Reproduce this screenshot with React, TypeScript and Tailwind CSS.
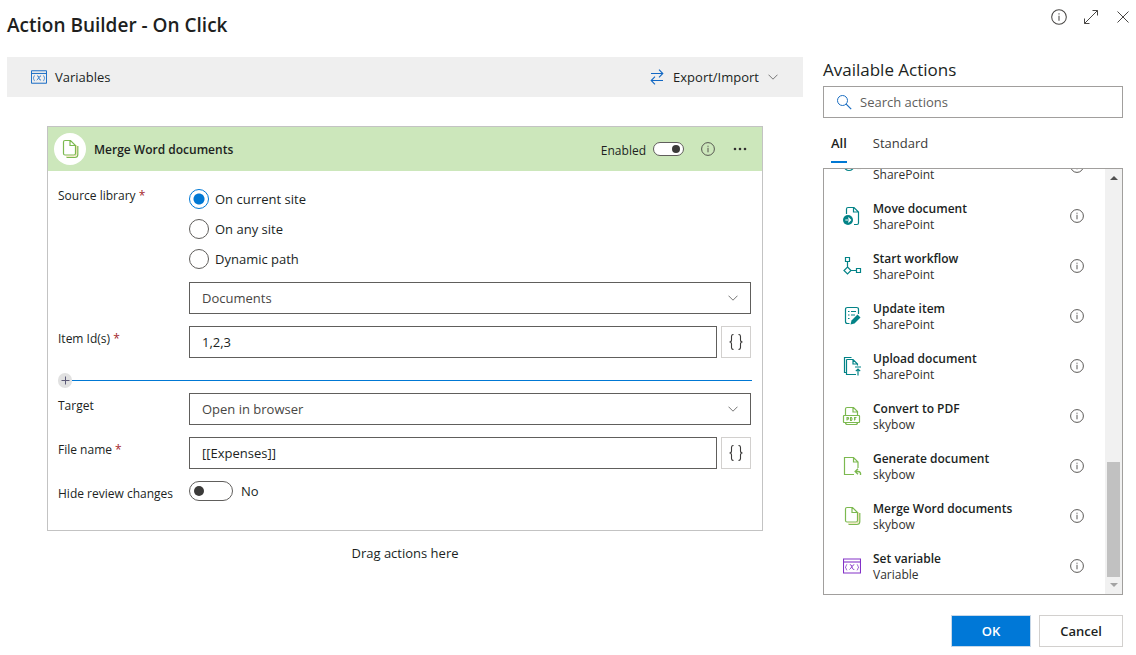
import { useState, type ReactNode } from "react";

const TEAL = "#038387";
const GREEN = "#7cb950";

function InfoIcon({ size = 14 }: { size?: number }) {
  return (
    <svg width={size} height={size} viewBox="0 0 14 14" fill="none" stroke="currentColor" aria-hidden="true">
      <circle cx="7" cy="7" r="6.4" strokeWidth="0.9" />
      <path d="M7 5.800v4.500M7 3.700v1.100" strokeWidth="0.9" />
    </svg>
  );
}

function ChevronIcon() {
  return (
    <svg width="10" height="6" viewBox="0 0 10 6" fill="none" stroke="#777" aria-hidden="true">
      <path d="M.5.7 5 5.2 9.500.7" />
    </svg>
  );
}

function VariableIcon({ color, size = 18 }: { color: string; size?: number }) {
  return (
    <svg width={size} height={size} viewBox="0 0 18 18" fill="none" stroke={color} aria-hidden="true">
      <path d="M.5 2h17v14H.5z" strokeWidth="1.1" />
      <path d="M.5 5h17" strokeWidth="1.1" />
      <path d="M4.200 7.500q-1 0-1 1.200t-1 1.600q1 .4 1 1.600t1 1.300M13.800 7.500q1 0 1 1.200t1 1.600q-1 .4-1 1.600t-1 1.300" strokeWidth=".8" />
      <path d="M6.800 7.700q1.500-.2 2 1.500l.5 2q.5 1.500 2 1.200M11.300 7.700q-1.300 0-2.300 1.800T6.500 12.500" strokeWidth=".9" />
    </svg>
  );
}

function Doc({ color, children }: { color: string; children: ReactNode }) {
  return (
    <svg width="20" height="20" viewBox="0 0 20 20" fill="none" stroke={color} strokeWidth="1.2" aria-hidden="true">
      {children}
    </svg>
  );
}

function ItemIcon() {
  return (
    <Doc color={TEAL}>
      <circle cx="7" cy="9.500" r="5" />
      <path d="M15 12.500h4" stroke="#b0b8b8" />
    </Doc>
  );
}

function MoveIcon() {
  return (
    <Doc color={TEAL}>
      <path d="M4.500 8V3q0-1.500 1.500-1.500h6l4.500 4.500v11q0 1.500-1.500 1.500h-3M11.500 1.500V6h5" />
      <circle cx="6" cy="14" r="5" fill={TEAL} stroke="none" />
      <path d="M3.300 14h5M6.300 11.700 8.600 14l-2.300 2.300" stroke="#fff" />
    </Doc>
  );
}

function WorkflowIcon() {
  return (
    <Doc color={TEAL}>
      <path d="M3.500 1.500h4v4h-4zM14.500 12.500h4v4h-4zM5.500 5.500v5.500M9 14.500h5.500M5.500 11 9 14.500 5.500 18 2 14.500z" />
    </Doc>
  );
}

function UpdateIcon() {
  return (
    <Doc color={TEAL}>
      <path d="M16.500 8V3.500q0-2-2-2h-9q-2 0-2 2v12q0 2 2 2h2M6 5.500h1.500M9 5.500h5M6 9h1.500M9 9h4M6 12.500h1.500" />
      <path d="m8.500 18.500 1-4 6-6 3 3-6 6z" fill={TEAL} stroke="none" />
    </Doc>
  );
}

function UploadIcon() {
  return (
    <Doc color={TEAL}>
      <path d="M9.500 1.500h-7v15h2M4.500 3.500v15H14M4.500 3.500h6.500l4.500 4.500v1.500M11 3.500V8h4.500M13 11h6M16 19.500v-6.500M13.800 15.200l2.200-2.200 2.200 2.200" />
    </Doc>
  );
}

function PdfIcon() {
  return (
    <Doc color={GREEN}>
      <path d="M3.500 9.500V3q0-1.500 1.500-1.500h6.500l4 4v4M11 1.500v4.500h4.500M2 9.500h15q.5 0 .5.500v6q0 .5-.5.500H2q-.5 0-.5-.5v-6q0-.5.500-.5M3.500 16.500q0 2 2 2h8q2 0 2-2" />
      <path d="M5 14.500v-3h1.300q.7.800 0 1.600H5M8.500 11.500v3h1q1.200-1.500 0-3zM12.500 14.500v-3h2M12.500 13h1.500" strokeWidth="1.1" />
    </Doc>
  );
}

function GenerateIcon() {
  return (
    <Doc color={GREEN}>
      <path d="M12 18.500H2.500v-17h9L16 6v6M11.500 1.500V6H16" />
      <path d="M13.500 15.500h2.500q3 0 2.500 3.500M16 12.800l-2.800 2.700 2.800 2.700" strokeWidth="1.4" />
    </Doc>
  );
}

function MergeIcon() {
  return (
    <Doc color={GREEN}>
      <path d="M3.500 3q0-1.500 1.500-1.500h5.500L15.500 6.500v8q0 1.500-1.500 1.500H5q-1.500 0-1.500-1.500zM10 1.500V6.500h5" />
      <path d="M17.800 7v8.500q0 3-3 3H6.500" />
      <path d="M16.600 6v8.500q0 2.700-2.700 2.700H6" stroke="#e0c878" strokeWidth=".6" />
    </Doc>
  );
}

const actions = [
  { name: "", source: "SharePoint", icon: <ItemIcon /> },
  { name: "Move document", source: "SharePoint", icon: <MoveIcon /> },
  { name: "Start workflow", source: "SharePoint", icon: <WorkflowIcon /> },
  { name: "Update item", source: "SharePoint", icon: <UpdateIcon /> },
  { name: "Upload document", source: "SharePoint", icon: <UploadIcon /> },
  { name: "Convert to PDF", source: "skybow", icon: <PdfIcon /> },
  { name: "Generate document", source: "skybow", icon: <GenerateIcon /> },
  { name: "Merge Word documents", source: "skybow", icon: <MergeIcon /> },
  { name: "Set variable", source: "Variable", icon: <VariableIcon color="#8332c8" /> },
];

function Field({ label, id, required, children }: { label: string; id: string; required?: boolean; children: ReactNode }) {
  return (
    <div className="flex">
      <label htmlFor={id} className="w-[131px] shrink-0 pt-[5px] text-[12px] leading-4">
        {label}
        {required && <span className="text-[#a4262c]"> *</span>}
      </label>
      <div className="min-w-0 flex-1">{children}</div>
    </div>
  );
}

function Select({ id, value }: { id: string; value: string }) {
  return (
    <div className="relative">
      <select id={id} className="h-8 w-full appearance-none border border-[#605e5c] bg-white px-3 pt-0.5 text-[13px] text-[#484644]">
        <option>{value}</option>
      </select>
      <span className="pointer-events-none absolute inset-y-0 right-[13px] flex items-center">
        <ChevronIcon />
      </span>
    </div>
  );
}

function ExpressionInput({ id, value }: { id: string; value: string }) {
  return (
    <div className="flex gap-1">
      <input id={id} defaultValue={value} className="h-8 min-w-0 flex-1 border border-[#605e5c] px-3 text-[13px]" />
      <button type="button" aria-label="Insert expression" className="flex h-8 w-[30px] items-center justify-center border border-[#d2d0ce]">
        <svg width="14" height="16" viewBox="0 0 14 16" fill="none" stroke="#3b3a39" strokeWidth="1.100" aria-hidden="true">
          <path d="M4.500.5Q2.500.5 2.500 2.500v3.500q0 2-2 2 2 0 2 2v3.500q0 2 2 2M9.500.5q2 0 2 2v3.500q0 2 2 2-2 0-2 2v3.500q0 2-2 2" />
        </svg>
      </button>
    </div>
  );
}

export default function App() {
  const [site, setSite] = useState("On current site");
  return (
    <div className="flex h-screen min-h-[655px] flex-col bg-white pr-[13px] pl-[7px] font-['Open_Sans','Noto_Sans',sans-serif] text-[13px] text-[#201f1e]">
      <header className="flex h-[57px] shrink-0 items-start justify-between">
        <h1 className="pt-3 text-[19px] leading-[26px] font-semibold">Action Builder - On Click</h1>
        <div className="-mr-2 flex items-center gap-4 pt-[9px] text-[#484644]">
          <button type="button" aria-label="Information"><InfoIcon size={16} /></button>
          <button type="button" aria-label="Expand">
            <svg width="16" height="16" viewBox="0 0 16 16" fill="none" stroke="currentColor" aria-hidden="true">
              <path d="M1.500 14.500l13-13M9.500 1.500h5v5M1.500 9.500v5h5" />
            </svg>
          </button>
          <button type="button" aria-label="Close">
            <svg width="16" height="16" viewBox="0 0 16 16" fill="none" stroke="currentColor" aria-hidden="true">
              <path d="M2.500 2.500l11 11M13.500 2.500l-11 11" />
            </svg>
          </button>
        </div>
      </header>

      <div className="flex min-h-0 flex-1 gap-5">
        <main className="min-w-0 flex-1">
          <div className="flex h-10 items-center justify-between bg-[#efefef] pr-[25px] pl-6">
            <button type="button" className="flex items-center gap-2">
              <VariableIcon color="#1268c4" size={16} />
              <span className="pt-0.5">Variables</span>
            </button>
            <button type="button" className="flex items-center gap-[9px]">
              <svg width="14" height="16" viewBox="0 0 14 16" fill="none" stroke="#1268c4" strokeWidth="1.100" aria-hidden="true">
                <path d="M1 4.500h12M9 .7l3.800 3.800L9 8.300M13 11.500H1M5 7.700l-3.800 3.800L5 15.300" />
              </svg>
              <span className="pt-0.5">Export/Import</span>
              <ChevronIcon />
            </button>
          </div>

          <section className="mx-10 mt-[29px] border border-[#c3c3c3]">
            <div className="flex h-11 items-center bg-[#cce7bb] pr-[15px] pl-[6px]">
              <span className="flex h-8 w-8 items-center justify-center rounded-full bg-white"><MergeIcon /></span>
              <h2 className="ml-2 flex-1 pt-0.5 text-[12px] font-semibold">Merge Word documents</h2>
              <span className="mr-[7px] pt-[3px] text-[12px]">Enabled</span>
              <button type="button" role="switch" aria-checked="true" aria-label="Enabled" className="flex h-[14px] w-[31px] items-center justify-end rounded-full border border-[#605e5c] bg-white px-[3px]">
                <span className="h-2 w-2 rounded-full bg-[#3b3a39]" />
              </button>
              <button type="button" aria-label="Action information" className="ml-[17px] text-[#484644]"><InfoIcon /></button>
              <button type="button" aria-label="More options" className="ml-[18px]">
                <svg width="14" height="4" viewBox="0 0 14 4" fill="#323130" aria-hidden="true">
                  <circle cx="2" cy="2" r="1.300" /><circle cx="7" cy="2" r="1.300" /><circle cx="12" cy="2" r="1.300" />
                </svg>
              </button>
            </div>

            <div className="flex flex-col gap-3 pt-3 pr-[11px] pb-[28px] pl-[10px]">
              <Field label="Source library" id="library" required>
                <div className="flex flex-col gap-[10px] pt-[6px] pb-[13px]">
                  {["On current site", "On any site", "Dynamic path"].map((option) => (
                    <label key={option} className="flex h-5 items-center gap-[6px]">
                      <input
                        type="radio"
                        name="site"
                        checked={site === option}
                        onChange={() => setSite(option)}
                        className="h-5 w-5 appearance-none rounded-full border border-[#605e5c] bg-white checked:border-[#0078d4] checked:bg-[radial-gradient(circle,#0078d4_5px,white_6px)]"
                      />
                      <span className="pt-0.5">{option}</span>
                    </label>
                  ))}
                </div>
                <Select id="library" value="Documents" />
              </Field>
              <Field label="Item Id(s)" id="items" required><ExpressionInput id="items" value="1,2,3" /></Field>
              <div className="mt-[3px] -mr-px -mb-[7px] flex h-[15px] items-center">
                <button type="button" aria-label="Add field" className="flex h-[15px] w-[14px] items-center justify-center rounded-full bg-[#e1e1e1]">
                  <svg width="9" height="9" viewBox="0 0 9 9" stroke="#5c5a78" aria-hidden="true"><path d="M4.500.5v8M.5 4.500h8" /></svg>
                </button>
                <span className="h-px flex-1 bg-[#0078d4]" />
              </div>
              <Field label="Target" id="target"><Select id="target" value="Open in browser" /></Field>
              <Field label="File name" id="filename" required><ExpressionInput id="filename" value="[[Expenses]]" /></Field>
              <Field label="Hide review changes" id="review">
                <div className="flex h-5 items-center gap-2">
                  <button id="review" type="button" role="switch" aria-checked="false" className="flex h-5 w-11 items-center rounded-full border border-[#605e5c] bg-white px-1">
                    <span className="h-[10px] w-[10px] rounded-full bg-[#3b3a39]" />
                  </button>
                  <span className="pt-0.5">No</span>
                </div>
              </Field>
            </div>
          </section>
          <p className="mt-3 text-center leading-5">Drag actions here</p>
        </main>

        <aside className="flex w-[300px] shrink-0 flex-col">
          <h2 className="mb-1 pt-px text-[17px] leading-6">Available Actions</h2>
          <label className="flex h-8 shrink-0 items-center gap-2 border border-[#a19f9d] pl-3">
            <svg width="16" height="16" viewBox="0 0 16 16" fill="none" stroke="#1b6ec2" aria-hidden="true">
              <circle cx="6.500" cy="6.500" r="5" /><path d="m10.200 10.200 5 5" strokeWidth="1.200" />
            </svg>
            <input aria-label="Search actions" placeholder="Search actions" className="min-w-0 flex-1 pt-0.5 outline-none placeholder:text-[#605e5c]" />
          </label>
          <div className="mb-[5px] flex h-[45px] shrink-0 gap-[26px] pl-2" role="tablist">
            <button type="button" role="tab" aria-selected="true" className="border-b-2 border-[#0078d4] pt-3 pb-[3px] font-semibold">All</button>
            <button type="button" role="tab" aria-selected="false" className="border-b-2 border-transparent pt-3 pb-[3px] text-[#3b3a39]">Standard</button>
          </div>
          <div className="flex min-h-0 flex-1 border border-[#a19f9d]">
            <ul className="flex min-w-0 flex-1 flex-col justify-end overflow-hidden pb-[3px]">
              {actions.map((action, index) => (
                <li key={index} className="flex h-[50px] shrink-0 items-center pr-[21px] pl-[18px]">
                  <span className="flex w-5 justify-center">{action.icon}</span>
                  <span className="ml-[11px] min-w-0 flex-1 pt-0.5 text-[12px] leading-4">
                    <span className="block h-4 font-semibold">{action.name}</span>
                    <span className="block text-[#323130]">{action.source}</span>
                  </span>
                  <button type="button" aria-label="Action details" className="text-[#484644]"><InfoIcon /></button>
                </li>
              ))}
            </ul>
            <div className="flex w-[17px] flex-col items-center justify-between bg-[#f1f1f1] py-[7px]" aria-hidden="true">
              <svg width="8" height="4" viewBox="0 0 8 4" fill="#505050"><path d="M0 4 4 0l4 4z" /></svg>
              <div className="flex w-[13px] flex-1 flex-col justify-end py-[6px]"><div className="h-[115px] bg-[#c1c1c1]" /></div>
              <svg width="8" height="4" viewBox="0 0 8 4" fill="#a3a3a3"><path d="M0 0l4 4 4-4z" /></svg>
            </div>
          </div>
          <footer className="flex shrink-0 justify-end gap-2 pt-5 pb-2">
            <button type="button" className="h-8 w-20 border border-[#c8d8e8] bg-[#0078d7] pt-0.5 font-semibold text-white">OK</button>
            <button type="button" className="h-8 w-[84px] border border-[#d2d0ce] pt-0.5 font-semibold">Cancel</button>
          </footer>
        </aside>
      </div>
    </div>
  );
}
